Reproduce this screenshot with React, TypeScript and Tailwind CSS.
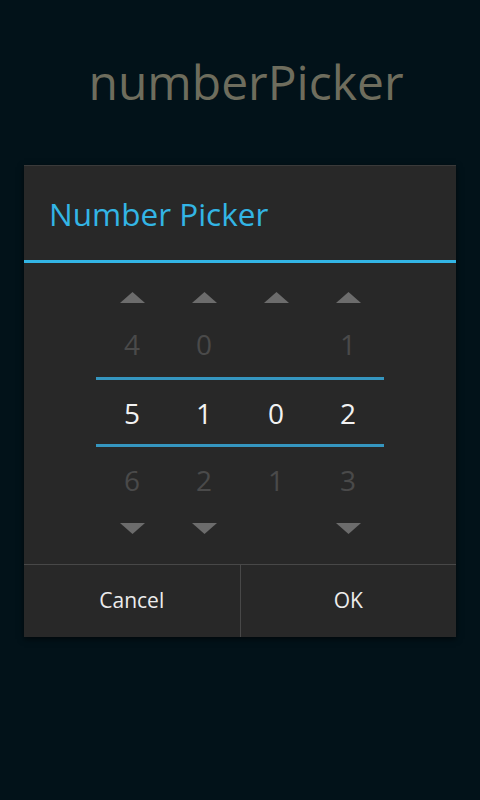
const columns = [
  { top: "4", value: "5", bottom: "6", up: true, down: true },
  { top: "0", value: "1", bottom: "2", up: true, down: true },
  { top: "", value: "0", bottom: "1", up: true, down: false },
  { top: "1", value: "2", bottom: "3", up: true, down: true },
];

function Arrow({ dir, show }: { dir: "up" | "down"; show: boolean }) {
  return (
    <div className="flex h-[11px] justify-center">
      {show && (
        <svg width="25" height="11" viewBox="0 0 25 11">
          {dir === "up" ? (
            <polygon points="12.5,0 25,11 0,11" fill="#6c6c6c" />
          ) : (
            <polygon points="0,0 25,0 12.5,11" fill="#6c6c6c" />
          )}
        </svg>
      )}
    </div>
  );
}

export default function App() {
  return (
    <div
      className="flex h-[800px] w-[480px] flex-col bg-[#021219]"
      style={{ fontFamily: '"Open Sans", "DejaVu Sans", sans-serif' }}
    >
      {/* App title */}
      <div className="mt-[58px] h-[48px] pl-3 text-center text-[48px] leading-[48px] text-[#6e6d5d]">numberPicker</div>

      {/* Dialog */}
      <div className="mx-6 mt-[59px] flex flex-col border-t border-[#3a3a3a] bg-[#282828] shadow-[0_2px_6px_rgba(0,0,0,0.6)]">
        <div className="flex h-[94px] items-center px-[25px]">
          <span className="text-[31.5px] leading-[31px] text-[#33b5e5]">Number Picker</span>
        </div>
        <div className="h-[3px] bg-[#33b5e5]" />

        {/* Picker */}
        <div className="mx-auto flex w-[288px] flex-col pt-[29px] pb-[30px]">
          <div className="grid grid-cols-4">
            {columns.map((c, i) => (
              <Arrow key={i} dir="up" show={c.up} />
            ))}
          </div>
          <div className="mt-[27px] grid grid-cols-4 text-center text-[28px] leading-[28px] text-[#4a4a4a]">
            {columns.map((c, i) => (
              <span key={i} className="h-[28px]">{c.top}</span>
            ))}
          </div>
          <div className="mt-[19px] h-[3px] bg-[#3596c0]" />
          <div className="mt-[19px] grid grid-cols-4 text-center text-[28px] leading-[28px] text-[#f2f2f2]">
            {columns.map((c, i) => (
              <span key={i}>{c.value}</span>
            ))}
          </div>
          <div className="mt-[17px] h-[3px] bg-[#3596c0]" />
          <div className="mt-[19px] grid grid-cols-4 text-center text-[28px] leading-[28px] text-[#4a4a4a]">
            {columns.map((c, i) => (
              <span key={i}>{c.bottom}</span>
            ))}
          </div>
          <div className="mt-[29px] grid grid-cols-4">
            {columns.map((c, i) => (
              <Arrow key={i} dir="down" show={c.down} />
            ))}
          </div>
        </div>

        {/* Buttons */}
        <div className="flex h-[73px] border-t border-[#484848]">
          <button className="flex flex-1 items-center justify-center text-[21px] text-[#ececec]">Cancel</button>
          <div className="w-px bg-[#484848]" />
          <button className="flex flex-1 items-center justify-center text-[21px] text-[#ececec]">OK</button>
        </div>
      </div>
    </div>
  );
}
